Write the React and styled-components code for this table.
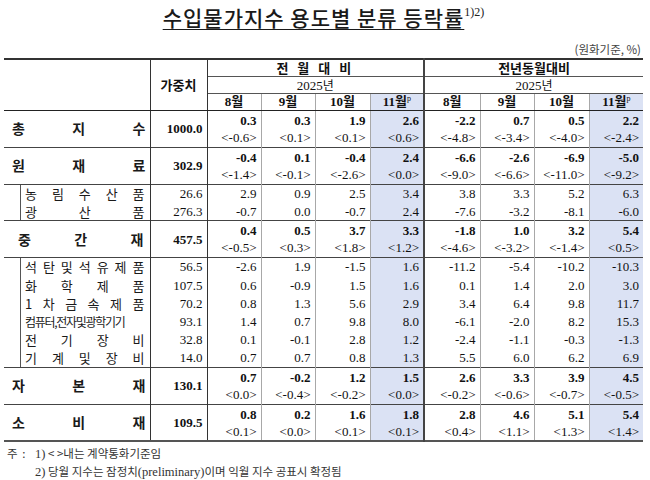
import React from "react";
import styled, { createGlobalStyle } from "styled-components";

const KR = `"Noto Sans CJK KR", "Noto Sans", sans-serif`;
const NUM = `"Liberation Serif", "Noto Sans CJK KR", serif`;

const GlobalStyle = createGlobalStyle`
  body {
    margin: 0;
    background: #ffffff;
    font-family: ${KR};
    color: #111111;
  }
`;

const head = [
  { label: "전 월 대 비", spaced: true },
  { label: "전년동월대비", spaced: false },
];
const months = ["8월", "9월", "10월", "11월"];

const rows = [
  {
    kind: "group",
    label: ["총", "지", "수"],
    w: "1000.0",
    v: [["0.3", "<-0.6>"], ["0.3", "<0.1>"], ["1.9", "<0.1>"], ["2.6", "<0.6>"],
      ["-2.2", "<-4.8>"], ["0.7", "<-3.4>"], ["0.5", "<-4.0>"], ["2.2", "<-2.4>"]],
  },
  {
    kind: "group",
    label: ["원", "재", "료"],
    w: "302.9",
    v: [["-0.4", "<-1.4>"], ["0.1", "<-0.1>"], ["-0.4", "<-2.6>"], ["2.4", "<0.0>"],
      ["-6.6", "<-9.0>"], ["-2.6", "<-6.6>"], ["-6.9", "<-11.0>"], ["-5.0", "<-9.2>"]],
  },
  { kind: "sub", line: true, label: ["농", "림", "수", "산", "품"], w: "26.6",
    v: ["2.9", "0.9", "2.5", "3.4", "3.8", "3.3", "5.2", "6.3"] },
  { kind: "sub", label: ["광", "산", "품"], w: "276.3",
    v: ["-0.7", "0.0", "-0.7", "2.4", "-7.6", "-3.2", "-8.1", "-6.0"] },
  {
    kind: "group",
    indent: true,
    label: ["중", "간", "재"],
    w: "457.5",
    v: [["0.4", "<-0.5>"], ["0.5", "<0.3>"], ["3.7", "<1.8>"], ["3.3", "<1.2>"],
      ["-1.8", "<-4.6>"], ["1.0", "<-3.2>"], ["3.2", "<-1.4>"], ["5.4", "<0.5>"]],
  },
  { kind: "sub", line: true, label: ["석", "탄", "및", "석", "유", "제", "품"], w: "56.5",
    v: ["-2.6", "1.9", "-1.5", "1.6", "-11.2", "-5.4", "-10.2", "-10.3"] },
  { kind: "sub", label: ["화", "학", "제", "품"], w: "107.5",
    v: ["0.6", "-0.9", "1.5", "1.6", "0.1", "1.4", "2.0", "3.0"] },
  { kind: "sub", label: ["1", "차", "금", "속", "제", "품"], w: "70.2",
    v: ["0.8", "1.3", "5.6", "2.9", "3.4", "6.4", "9.8", "11.7"] },
  { kind: "sub", tight: true, label: ["컴퓨터,전자및광학기기"], w: "93.1",
    v: ["1.4", "0.7", "9.8", "8.0", "-6.1", "-2.0", "8.2", "15.3"] },
  { kind: "sub", label: ["전", "기", "장", "비"], w: "32.8",
    v: ["0.1", "-0.1", "2.8", "1.2", "-2.4", "-1.1", "-0.3", "-1.3"] },
  { kind: "sub", label: ["기", "계", "및", "장", "비"], w: "14.0",
    v: ["0.7", "0.7", "0.8", "1.3", "5.5", "6.0", "6.2", "6.9"] },
  {
    kind: "group",
    label: ["자", "본", "재"],
    w: "130.1",
    v: [["0.7", "<0.0>"], ["-0.2", "<-0.4>"], ["1.2", "<-0.2>"], ["1.5", "<0.0>"],
      ["2.6", "<-0.2>"], ["3.3", "<-0.6>"], ["3.9", "<-0.7>"], ["4.5", "<-0.5>"]],
  },
  {
    kind: "group",
    label: ["소", "비", "재"],
    w: "109.5",
    v: [["0.8", "<0.1>"], ["0.2", "<0.0>"], ["1.6", "<0.1>"], ["1.8", "<0.1>"],
      ["2.8", "<0.4>"], ["4.6", "<1.1>"], ["5.1", "<1.3>"], ["5.4", "<1.4>"]],
  },
];

const colWidths = [146, 57, 54, 54, 55, 54, 56, 54, 55, 54];

// right border by data column index (0..7)
const sepFor = (i) => (i === 3 ? "major" : i === 7 ? "none" : "minor");

export default function App() {
  return (
    <>
      <GlobalStyle />
      <Page>
        <TitleBar>
          <Title>수입물가지수 용도별 분류 등락률</Title>
          <TitleNote>1)2)</TitleNote>
        </TitleBar>
        <Unit>(원화기준, %)</Unit>

        <Table>
          <colgroup>
            {colWidths.map((w, i) => (
              <col key={i} style={{ width: w }} />
            ))}
          </colgroup>
          <thead>
            <HeadRow $h={17}>
              <BlankHead rowSpan={3} />
              <WeightHead rowSpan={3}>가중치</WeightHead>
              {head.map((h, i) => (
                <GroupHead key={i} colSpan={4} $spaced={h.spaced} $last={i === 1}>
                  {h.label}
                </GroupHead>
              ))}
            </HeadRow>
            <HeadRow $h={17}>
              {head.map((h, i) => (
                <YearHead key={i} colSpan={4} $last={i === 1}>
                  <span>2025</span>년
                </YearHead>
              ))}
            </HeadRow>
            <HeadRow $h={17}>
              {[0, 1].map((g) =>
                months.map((m, i) => (
                  <MonthHead key={`${g}-${i}`} $sep={sepFor(g * 4 + i)} $shade={i === 3}>
                    {m}
                    {i === 3 && <Sup>p</Sup>}
                  </MonthHead>
                ))
              )}
            </HeadRow>
          </thead>
          <tbody>
            {rows.map((r, ri) => (
              <BodyRow key={ri} $group={r.kind === "group"} $line={r.kind === "group" || r.line}>
                <LabelCell $sub={r.kind === "sub"}>
                  <Label $sub={r.kind === "sub"} $indent={r.indent} $tight={r.tight}>
                    {r.label.map((c, ci) => (
                      <span key={ci}>{c}</span>
                    ))}
                  </Label>
                </LabelCell>
                <WeightCell $bold={r.kind === "group"}>{r.w}</WeightCell>
                {r.v.map((val, vi) => (
                  <NumCell key={vi} $sep={sepFor(vi)} $shade={vi % 4 === 3}>
                    {r.kind === "group" ? (
                      <>
                        <Main>{val[0]}</Main>
                        <Bracket>{val[1]}</Bracket>
                      </>
                    ) : (
                      val
                    )}
                  </NumCell>
                ))}
              </BodyRow>
            ))}
          </tbody>
        </Table>

        <Notes>
          <NoteKey>주 :</NoteKey>
          <NoteText>
            <span>1)</span> &lt; &gt;내는 계약통화기준임
          </NoteText>
          <span />
          <NoteText>
            <span>2)</span> 당월 지수는 잠정치<Latin>(preliminary)</Latin>이며 익월 지수 공표시 확정됨
          </NoteText>
        </Notes>
      </Page>
    </>
  );
}

/* ===== styles ===== */
const Page = styled.div`
  width: 650px;
  height: 480px;
  box-sizing: border-box;
  padding: 0 7px 0 4px;
  background: #ffffff;
  overflow: hidden;
`;

const TitleBar = styled.div`
  height: 38px;
  padding-top: 5px;
  box-sizing: border-box;
  display: flex;
  justify-content: center;
  align-items: flex-start;
`;

const Title = styled.h1`
  margin: 0;
  font-family: ${KR};
  font-size: 21px;
  font-weight: 500;
  line-height: 25px;
  letter-spacing: 1px;
  color: #1a1a1a;
  text-decoration: underline;
  text-decoration-thickness: 1px;
  text-underline-offset: 3px;
`;

const TitleNote = styled.span`
  font-family: ${NUM};
  font-size: 12px;
  line-height: 14px;
  color: #222222;
`;

const Unit = styled.div`
  height: 20px;
  line-height: 22px;
  text-align: right;
  font-family: ${KR};
  font-size: 11.5px;
  color: #444444;
  padding-right: 2px;
`;

const Table = styled.table`
  width: 639px;
  table-layout: fixed;
  border-collapse: collapse;
  border-top: 2px solid #333333;
  border-bottom: 2px solid #555555;
`;

const HeadRow = styled.tr`
  height: ${(p) => p.$h}px;
`;

const headCell = `
  padding: 0;
  text-align: center;
  vertical-align: middle;
  color: #111111;
  line-height: 15px;
`;

const BlankHead = styled.th`
  ${headCell};
  border-right: 1px solid #333333;
  border-bottom: 1px solid #222222;
`;

const WeightHead = styled.th`
  ${headCell};
  font-family: ${KR};
  font-size: 13px;
  font-weight: 700;
  border-right: 1px solid #333333;
  border-bottom: 1px solid #222222;
`;

const GroupHead = styled.th`
  ${headCell};
  font-family: ${KR};
  font-size: 13px;
  font-weight: 700;
  letter-spacing: ${(p) => (p.$spaced ? "3px" : "0")};
  border-bottom: 1px solid #555555;
  border-right: ${(p) => (p.$last ? "none" : "2px solid #444444")};
`;

const YearHead = styled.th`
  ${headCell};
  font-family: ${KR};
  font-size: 12px;
  font-weight: 400;
  border-bottom: 1px solid #555555;
  border-right: ${(p) => (p.$last ? "none" : "2px solid #444444")};

  span {
    font-family: ${NUM};
    font-size: 13px;
  }
`;

const borderFor = (sep) =>
  sep === "major" ? "2px solid #444444" : sep === "minor" ? "1px solid #a8a8a8" : "none";

const MonthHead = styled.th`
  ${headCell};
  font-family: ${NUM};
  font-size: 13px;
  font-weight: 700;
  background: ${(p) => (p.$shade ? "#dbe2f4" : "transparent")};
  border-right: ${(p) => borderFor(p.$sep)};
  border-bottom: 1px solid #222222;
`;

const Sup = styled.sup`
  font-size: 8px;
  font-weight: 400;
  vertical-align: 5px;
  line-height: 0;
`;

const BodyRow = styled.tr`
  height: ${(p) => (p.$group ? 37 : 18.3)}px;

  td {
    border-top: ${(p) => (p.$line ? "1px solid #444444" : "none")};
  }
`;

const LabelCell = styled.td`
  padding: 0;
  vertical-align: middle;
  border-right: 1px solid #333333;
  background: ${(p) =>
    p.$sub
      ? "linear-gradient(to right, transparent 16px, #555555 16px, #555555 17px, transparent 17px)"
      : "transparent"};
`;

const Label = styled.div`
  display: flex;
  justify-content: space-between;
  align-items: center;
  padding: ${(p) => (p.$sub ? "0 5px 0 21px" : p.$indent ? "0 6px 0 14px" : "0 4px 0 8px")};
  font-family: ${KR};
  font-size: ${(p) => (p.$sub ? (p.$tight ? "12px" : "13px") : "14px")};
  font-weight: ${(p) => (p.$sub ? 400 : 700)};
  letter-spacing: ${(p) => (p.$tight ? "-1.3px" : "0")};
  line-height: 17px;
  color: #1a1a1a;
  white-space: nowrap;
`;

const WeightCell = styled.td`
  padding: 0 4px 0 0;
  text-align: right;
  vertical-align: middle;
  font-family: ${NUM};
  font-size: 13px;
  line-height: 17px;
  font-weight: ${(p) => (p.$bold ? 700 : 400)};
  border-right: 1px solid #333333;
`;

const NumCell = styled.td`
  padding: 0 4px 0 0;
  text-align: right;
  vertical-align: middle;
  font-family: ${NUM};
  font-size: 13px;
  line-height: 17px;
  background: ${(p) => (p.$shade ? "#dbe2f4" : "transparent")};
  border-right: ${(p) => borderFor(p.$sep)};
`;

const Main = styled.div`
  font-weight: 700;
  line-height: 17px;
`;

const Bracket = styled.div`
  font-weight: 400;
  line-height: 17px;
`;

const Notes = styled.div`
  display: grid;
  grid-template-columns: 28px 1fr;
  padding: 3px 0 0 3px;
  font-family: ${KR};
  font-size: 11.5px;
  line-height: 17px;
  color: #333333;
`;

const NoteKey = styled.span`
  letter-spacing: 1px;
`;

const NoteText = styled.span`
  white-space: nowrap;

  span {
    font-family: ${NUM};
    font-size: 12.5px;
  }
`;

const Latin = styled.span`
  font-family: ${NUM};
  font-size: 12.5px;
`;
